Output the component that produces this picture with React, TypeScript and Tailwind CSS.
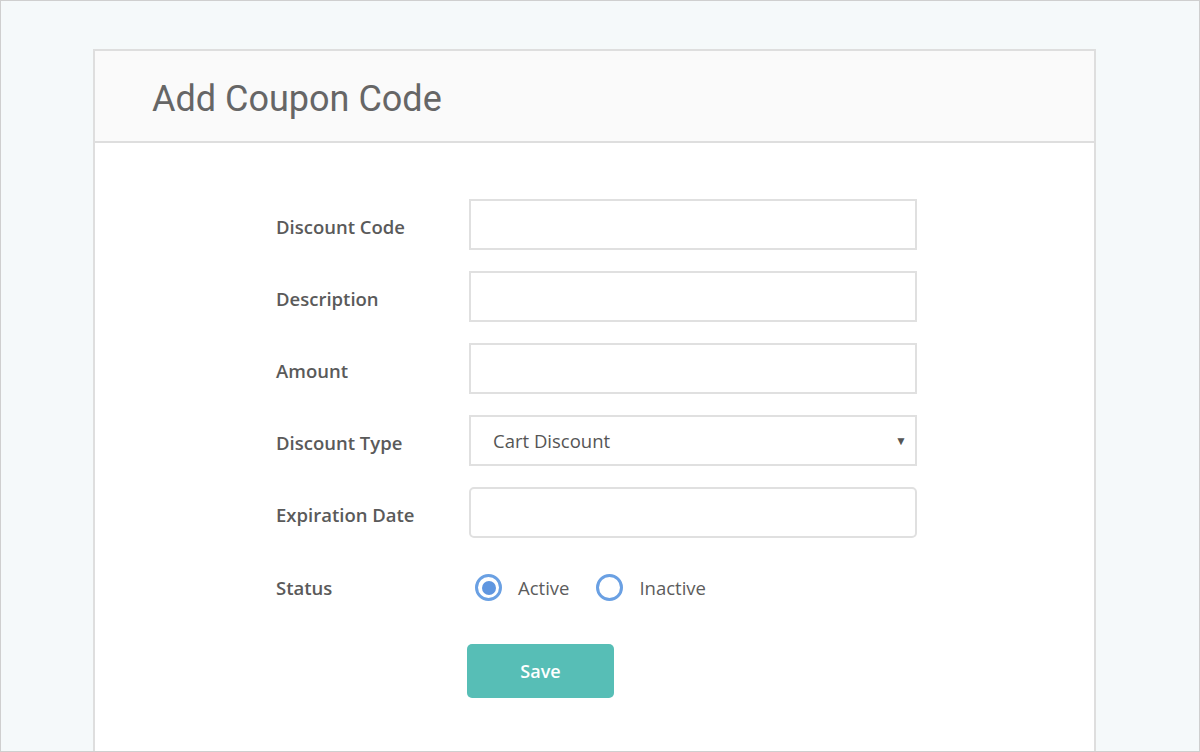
import React from "react";

const labelCls =
  "text-[18.5px] font-semibold text-[#5a5a5a] [font-family:'Open_Sans',sans-serif]";
const inputCls =
  "h-[51px] w-[448px] border-2 border-[#e0e0e0] bg-white outline-none px-[22px] text-[18.5px] text-[#555] [font-family:'Open_Sans',sans-serif]";

function Row({ label, children, className = "", labelPad = "pt-[5px]" }: { label: string; children: React.ReactNode; className?: string; labelPad?: string }) {
  return (
    <div className={"flex items-center h-[51px] " + className}>
      <div className={"w-[193px] " + labelPad + " " + labelCls}>{label}</div>
      {children}
    </div>
  );
}

function Radio({ checked, label }: { checked: boolean; label: string }) {
  return (
    <label className="flex items-center">
      <span className="w-[27px] h-[27px] rounded-full border-[3px] border-[#6aa0e3] bg-white flex items-center justify-center">
        {checked && <span className="w-[14px] h-[14px] rounded-full bg-[#5f96e0]" />}
      </span>
      <span className="ml-[16px] text-[18.5px] text-[#5c5c5c] [font-family:'Open_Sans',sans-serif]">{label}</span>
    </label>
  );
}

export default function App() {
  return (
    <div className="h-[752px] w-[1200px] overflow-hidden border border-[#cfcfcf] bg-[#f5f9fa] pt-[48px] pl-[92px]">
      <div className="w-[1003px] h-[720px] border-2 border-[#dedede] bg-white">
        <div className="h-[92px] bg-[#fafafa] border-b-2 border-[#dedede] pl-[57px] flex items-center">
          <h1 className="text-[36px] font-normal text-[#666] [font-family:Roboto,sans-serif] pt-[5px]">Add Coupon Code</h1>
        </div>
        <div className="pl-[181px] pt-[56px] flex flex-col gap-[21px]">
          <Row label="Discount Code">
            <input className={inputCls} />
          </Row>
          <Row label="Description">
            <input className={inputCls} />
          </Row>
          <Row label="Amount">
            <input className={inputCls} />
          </Row>
          <Row label="Discount Type">
            <div className={inputCls + " flex items-center justify-between pr-[8px]"}>
              <span className="pt-[1px]">Cart Discount</span>
              <span className="text-[12px] text-[#555]">▼</span>
            </div>
          </Row>
          <Row label="Expiration Date">
            <input className={inputCls + " rounded-[5px]"} />
          </Row>
          <Row label="Status" className="mt-[3px]" labelPad="pt-[1px]">
            <div className="flex items-center gap-[27px] pl-[6px]">
              <Radio checked label="Active" />
              <Radio checked={false} label="Inactive" />
            </div>
          </Row>
          <div className="pl-[191px] mt-[10px]">
            <button className="w-[147px] h-[54px] rounded-[5px] bg-[#57beb6] text-white text-[18px] font-semibold [font-family:'Open_Sans',sans-serif]">
              Save
            </button>
          </div>
        </div>
      </div>
    </div>
  );
}
